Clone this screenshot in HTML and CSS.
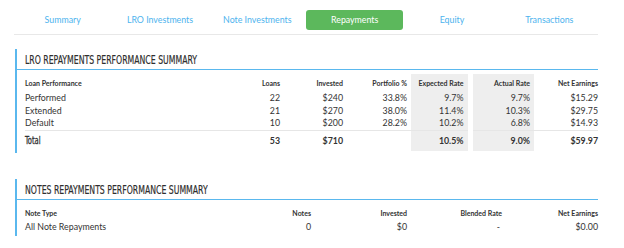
FILE: index.html
```html
<!DOCTYPE html>
<html>
<head>
<meta charset="utf-8">
<link rel="stylesheet" href="styles.css">
</head>
<body>
<div class="page">
  <nav class="tabs">
    <a class="tab">Summary</a>
    <a class="tab">LRO Investments</a>
    <a class="tab">Note Investments</a>
    <a class="tab active">Repayments</a>
    <a class="tab">Equity</a>
    <a class="tab">Transactions</a>
  </nav>

  <section class="card card-lro">
    <h2 class="card-title"><span class="title-text">LRO Repayments Performance Summary</span></h2>
    <table class="perf">
      <colgroup>
        <col class="c-name"><col class="c-loans"><col class="c-inv"><col class="c-port"><col class="c-exp"><col class="c-act"><col class="c-net">
      </colgroup>
      <thead>
        <tr><th class="l">Loan Performance</th><th>Loans</th><th>Invested</th><th>Portfolio %</th><th class="shade">Expected Rate</th><th class="shade gap">Actual Rate</th><th class="last">Net Earnings</th></tr>
      </thead>
      <tbody>
        <tr><td class="l">Performed</td><td>22</td><td>$240</td><td>33.8%</td><td class="shade">9.7%</td><td class="shade gap">9.7%</td><td class="last">$15.29</td></tr>
        <tr><td class="l">Extended</td><td>21</td><td>$270</td><td>38.0%</td><td class="shade">11.4%</td><td class="shade gap">10.3%</td><td class="last">$29.75</td></tr>
        <tr><td class="l">Default</td><td>10</td><td>$200</td><td>28.2%</td><td class="shade">10.2%</td><td class="shade gap">6.8%</td><td class="last">$14.93</td></tr>
      </tbody>
      <tfoot>
        <tr><td class="l total-label"><span class="total-text">Total</span></td><td>53</td><td>$710</td><td></td><td class="shade">10.5%</td><td class="shade gap">9.0%</td><td class="last">$59.97</td></tr>
      </tfoot>
    </table>
  </section>

  <section class="card card-notes">
    <h2 class="card-title"><span class="title-text">Notes Repayments Performance Summary</span></h2>
    <table class="notes">
      <colgroup>
        <col class="n-name"><col class="n-notes"><col class="n-inv"><col class="n-rate"><col class="n-net">
      </colgroup>
      <thead>
        <tr><th class="l">Note Type</th><th>Notes</th><th>Invested</th><th>Blended Rate</th><th>Net Earnings</th></tr>
      </thead>
      <tbody>
        <tr><td class="l">All Note Repayments</td><td>0</td><td>$0</td><td class="dash">-</td><td>$0.00</td></tr>
      </tbody>
    </table>
  </section>
</div>
</body>
</html>
```

FILE: styles.css
```css
* { box-sizing: border-box; }
html, body { margin: 0; padding: 0; background: #fff; }
body {
  font-family: Lato, "Open Sans", sans-serif;
  color: #333;
  font-size: 8.8px;
}
.page {
  width: 584px;
  margin-left: 14px;
}
.tabs {
  display: grid;
  grid-template-columns: repeat(6, 1fr);
  padding-top: 10px;
  padding-bottom: 4px;
  border-bottom: 1px solid #e8e8e8;
}
.tab {
  display: block;
  height: 20px;
  line-height: 20px;
  text-align: center;
  color: #4db3ee;
  font-size: 8.8px;
  border-radius: 3px;
}
.tab.active {
  background: #5cb85c;
  color: #fff;
}

.card {
  margin-left: 1px;
  border-left: 2px solid #5ab8ee;
}
.card-lro { margin-top: 14px; padding-bottom: 2px; }
.card-notes { margin-top: 26px; padding-bottom: 3px; }

.card-title {
  margin: 0;
  height: 21px;
  padding: 4px 0 0 8px;
  border-bottom: 1px solid #5ab8ee;
  font-family: "DejaVu Sans Condensed", "DejaVu Sans", sans-serif;
  font-stretch: condensed;
  font-weight: normal;
  font-size: 12.5px;
  line-height: 14px;
  text-transform: uppercase;
  color: #2e2e2e;
  white-space: nowrap;
}
.title-text {
  display: inline-block;
  transform: scaleX(0.69);
  transform-origin: left center;
  -webkit-text-stroke: 0.2px #2e2e2e;
}

table {
  border-collapse: collapse;
  border-spacing: 0;
  table-layout: fixed;
  margin-left: 8px;
  width: 573px;
}
th, td {
  padding: 0 4px 0 0;
  text-align: right;
  white-space: nowrap;
}
th.l, td.l { text-align: left; }
th.last, td.last { padding-right: 0; }
th {
  font-size: 7px;
  font-weight: bold;
  height: 18px;
}

.perf { margin-top: 4px; }
.perf td { height: 12.5px; line-height: 12.5px; }
.perf col.c-name { width: 205px; }
.perf col.c-loans { width: 54px; }
.perf col.c-inv { width: 63px; }
.perf col.c-port { width: 64px; }
.perf col.c-exp { width: 59px; }
.perf col.c-act { width: 64px; }
.perf col.c-net { width: 64px; }
.shade { background: #eeeeee; }
.shade.gap { border-left: 5px solid #fff; }
.perf tfoot td {
  height: 21px;
  font-weight: bold;
  border-top: 1px solid #e6e6e6;
}
.total-label {
  font-family: "DejaVu Sans Condensed", "DejaVu Sans", sans-serif;
  font-stretch: condensed;
  font-size: 10px;
}
.perf tfoot td.total-label { font-weight: normal; }
.total-text {
  display: inline-block;
  transform: scaleX(0.75);
  transform-origin: left center;
  -webkit-text-stroke: 0.3px #333;
}

.notes { margin-top: 4px; }
.notes th, .notes td { padding-right: 0; }
.notes th { height: 17px; }
.notes td { height: 12px; line-height: 12px; }
.notes col.n-name { width: 225px; }
.notes col.n-notes { width: 61px; }
.notes col.n-inv { width: 96px; }
.notes col.n-rate { width: 95px; }
.notes col.n-net { width: 96px; }
.notes td.dash { padding-right: 2px; }
```
